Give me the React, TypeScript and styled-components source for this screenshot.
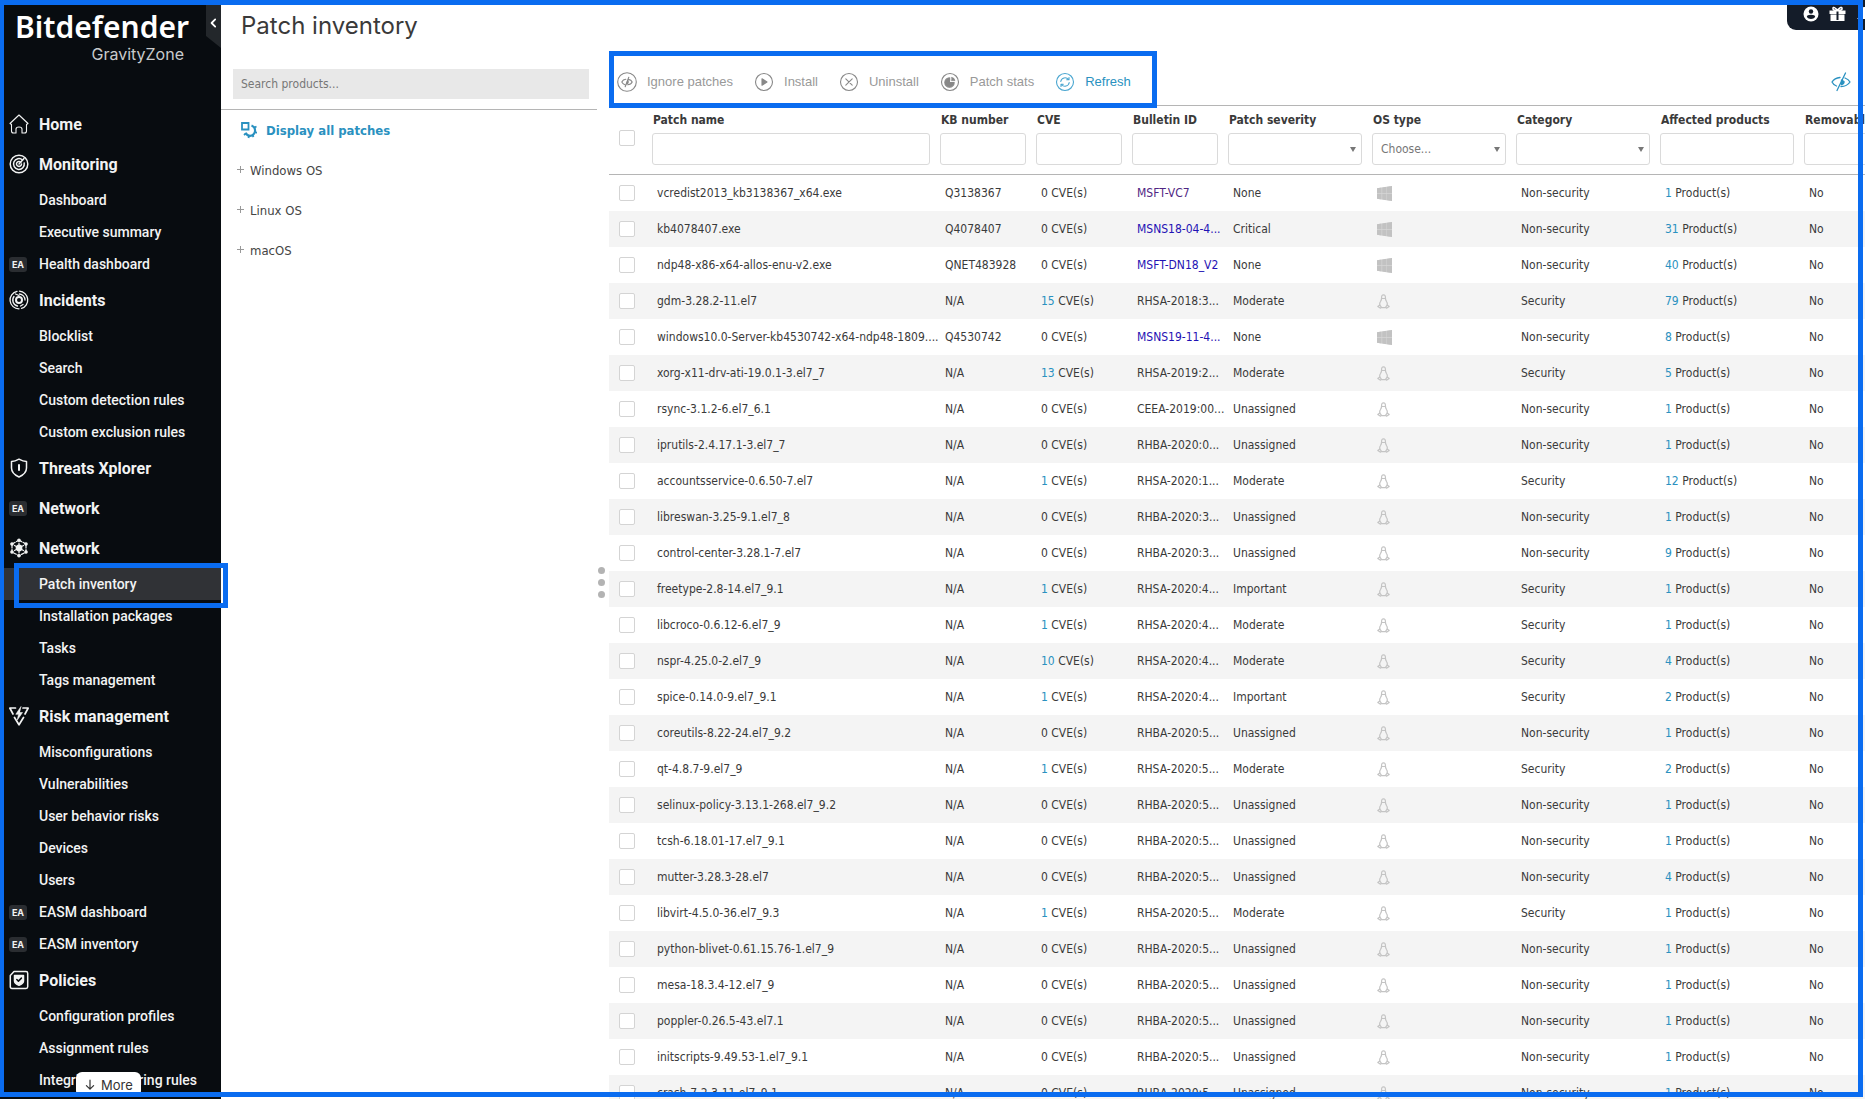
import React from "react";
import styled, { createGlobalStyle, css } from "styled-components";

const Global = createGlobalStyle`
  *, *::before, *::after { box-sizing: border-box; }
  body { margin: 0; background: #fff; overflow: hidden; }
  button, input, select { font: inherit; color: inherit; }
`;

const UI = `"DejaVu Sans Condensed", "Noto Sans", sans-serif`;
const NAV = `Roboto, "Noto Sans", sans-serif`;
const BRAND = `Inter, "Noto Sans", sans-serif`;
const ACCENT = "#0a6cf0";
const LINK = "#2a91c0";

const Page = styled.div`
  display: flex;
  position: relative;
  height: 100vh;
  overflow: hidden;
  font-family: ${UI};
  font-size: 12px;
  color: #3a3a3a;
`;

const Frame = styled.div`
  position: absolute;
  inset: 0 2px 2px 0;
  border: 5px solid ${ACCENT};
  border-left-width: 4px;
  pointer-events: none;
  z-index: 5;
`;

const Sidebar = styled.aside`
  position: relative;
  flex: none;
  width: 221px;
  background: #080c10;
  color: #f2f3f3;
  font-family: ${NAV};
`;

const Brand = styled.div`
  display: flex;
  flex-direction: column;
  align-items: flex-end;
  height: 104px;
  padding: 8px 32px 0 0;
  font-family: "Noto Sans", sans-serif;
  font-weight: 600;
  font-size: 30px;
  line-height: 38px;
  color: #fff;
`;

const Product = styled.span`
  padding-right: 5px;
  font-family: ${BRAND};
  font-weight: 400;
  font-size: 16px;
  line-height: 16px;
  color: #c9cbcd;
`;

const Collapse = styled.button`
  position: absolute;
  top: 0;
  right: 0;
  width: 15px;
  height: 48px;
  padding: 0;
  border: 0;
  background: #23272b;
  clip-path: polygon(100% 0, 0 0, 0 36px, 100% 100%);
  color: #fff;
`;

const NavItem = styled.a<{ $top?: boolean; $active?: boolean }>`
  position: relative;
  display: flex;
  align-items: center;
  height: ${(p) => (p.$top ? 40 : 32)}px;
  padding-left: 9px;
  background: ${(p) => (p.$active ? "#303236" : "transparent")};
  font-size: ${(p) => (p.$top ? 16 : 14)}px;
  font-weight: ${(p) => (p.$top ? 700 : 500)};
  color: inherit;
  text-decoration: none;
  white-space: nowrap;
  ${(p) =>
    p.$active &&
    css`
      &::after {
        content: "";
        position: absolute;
        inset: -5px -7px -8px 14px;
        border: 5px solid ${ACCENT};
        z-index: 6;
      }
    `}
`;

const NavIcon = styled.span`
  display: flex;
  flex: none;
  width: 30px;
`;

const EaTag = styled.span`
  width: 18px;
  border-radius: 3px;
  background: #2a2d31;
  font-family: ${BRAND};
  font-size: 9px;
  font-weight: 700;
  line-height: 15px;
  text-align: center;
`;

const More = styled.button`
  position: absolute;
  left: 76px;
  bottom: 2px;
  display: flex;
  align-items: center;
  gap: 5px;
  height: 25px;
  padding: 0 8px;
  border: 0;
  border-radius: 6px;
  background: #fff;
  font-family: ${BRAND};
  font-size: 13px;
  color: #333;
`;

const Main = styled.main`
  display: flex;
  flex-direction: column;
  flex: 1;
  min-width: 0;
`;

const TitleBar = styled.header`
  display: flex;
  justify-content: space-between;
  align-items: flex-start;
  flex: none;
  height: 49px;
  padding-left: 20px;
`;

const Title = styled.h1`
  margin: 0;
  padding-top: 12px;
  font-family: ${BRAND};
  font-size: 24px;
  font-weight: 400;
  line-height: 28px;
  color: #3a3a3a;
`;

const Account = styled.div`
  display: flex;
  align-items: center;
  gap: 10px;
  width: 78px;
  height: 30px;
  padding: 0 0 2px 16px;
  border-bottom-left-radius: 9px;
  background: #141c29;
  overflow: hidden;
`;

const IconButton = styled.button`
  display: flex;
  flex: none;
  padding: 0;
  border: 0;
  background: none;
  color: ${LINK};
`;

const Body = styled.div`
  display: flex;
  flex: 1;
  min-height: 0;
`;

const Products = styled.section`
  flex: none;
  width: 376px;
  font-size: 13px;
`;

const SearchRow = styled.div`
  padding: 20px 8px 10px 12px;
  border-bottom: 1px solid #b5b5b5;
`;

const Search = styled.input`
  display: block;
  width: 100%;
  height: 30px;
  padding: 0 8px;
  border: 0;
  background: #e8e8e8;
  font-size: 12px;
  &::placeholder { color: #777; opacity: 1; }
`;

const TreeItem = styled.button<{ $all?: boolean }>`
  display: flex;
  align-items: center;
  gap: ${(p) => (p.$all ? 9 : 5)}px;
  width: 100%;
  height: 40px;
  padding: 0 0 0 ${(p) => (p.$all ? 20 : 16)}px;
  border: 0;
  background: none;
  font-weight: ${(p) => (p.$all ? 700 : 400)};
  color: ${(p) => (p.$all ? LINK : "#444")};
`;

const Splitter = styled.div`
  display: flex;
  flex-direction: column;
  justify-content: center;
  gap: 5px;
  flex: none;
  width: 12px;
  padding: 16px 0 0 1px;
`;

const Dot = styled.span`
  width: 7px;
  height: 7px;
  border-radius: 50%;
  background: #b3b3b3;
`;

const Inventory = styled.section`
  display: flex;
  flex-direction: column;
  flex: 1;
  min-width: 0;
`;

const Toolbar = styled.div`
  display: flex;
  justify-content: space-between;
  align-items: center;
  flex: none;
  height: 56px;
  padding: 9px 14px 0 0;
`;

const Actions = styled.div`
  position: relative;
  display: flex;
  align-items: center;
  gap: 21px;
  height: 46px;
  padding: 0 26px 0 8px;
  &::after {
    content: "";
    position: absolute;
    inset: -8px 0 -3px;
    border: 5px solid ${ACCENT};
    pointer-events: none;
  }
`;

const Action = styled.button<{ $on?: boolean }>`
  display: flex;
  align-items: center;
  gap: 10px;
  padding: 0;
  border: 0;
  background: none;
  font-family: "Liberation Sans", sans-serif;
  font-size: 13px;
  color: ${(p) => (p.$on ? LINK : "#999")};
  svg { color: ${(p) => (p.$on ? "#4aa6d0" : "#888")}; }
`;

const Scroller = styled.div`
  flex: 1;
  overflow: hidden;
  border-top: 1px solid #b5b5b5;
`;

const Table = styled.table`
  width: 100%;
  min-width: 1334px;
  table-layout: fixed;
  border-spacing: 0;
`;

const Head = styled.th`
  padding: 5px 5px 9px;
  border-bottom: 1px solid #b5b5b5;
  text-align: left;
  font-weight: 700;
  line-height: 18px;
  white-space: nowrap;
`;

const HeadLabel = styled.label`
  display: block;
  margin-bottom: 4px;
  padding-left: 1px;
`;

const field = css`
  display: block;
  width: 100%;
  height: 32px;
  padding: 0 8px;
  border: 1px solid #dadada;
  border-radius: 3px;
  background: #fff;
  font-weight: 400;
  color: #777;
`;

const Filter = styled.input`${field}`;

const Select = styled.select`
  ${field}
  appearance: none;
`;

const SelectBox = styled.span`
  position: relative;
  display: block;
  &::after {
    content: "";
    position: absolute;
    right: 6px;
    top: 14px;
    border: solid transparent;
    border-width: 5px 3px 0;
    border-top-color: #777;
    pointer-events: none;
  }
`;

const Check = styled.input`
  display: block;
  appearance: none;
  width: 16px;
  height: 16px;
  margin: 0 0 0 5px;
  border: 1px solid #d4d4d4;
  border-radius: 2px;
  background: #fff;
`;

const Row = styled.tr`
  &:nth-child(even) { background: #f4f4f4; }
`;

const Cell = styled.td`
  height: 36px;
  padding: 0 0 0 10px;
  line-height: 18px;
  white-space: nowrap;
  svg { display: block; }
`;

const CheckCell = styled(Cell)`
  padding-left: 5px;
`;

const Link = styled.a<{ $visited?: boolean }>`
  color: ${(p) => (p.$visited ? "#4f2683" : "#1f12b4")};
  text-decoration: none;
`;

const Count = styled.a`
  color: ${LINK};
  text-decoration: none;
`;

const Svg = ({ size = 20, w = 1.4, children }: { size?: number; w?: number; children: React.ReactNode }) => (
  <svg width={size} height={size} viewBox="0 0 20 20" fill="none" stroke="currentColor" strokeWidth={w} strokeLinecap="round" strokeLinejoin="round" aria-hidden="true">
    {children}
  </svg>
);

const navIcons: Record<string, React.ReactNode> = {
  home: <Svg w={1.1}><path d="M1 9.5 10 1l9 8.500-1.500 1V17q0 2-2 2H13v-4q0-2-3-2t-3 2v4H4.500q-2 0-2-2v-6.500Z" /></Svg>,
  monitoring: <Svg w={1.5}><circle cx="10" cy="10" r="8.800" /><path d="M13.500 6A5.400 5.400 0 1 0 15.200 9M11.800 8.200A2.500 2.500 0 1 0 12.500 10" /><path d="m10 10 5-5.500" /></Svg>,
  incidents: <Svg w={1.3}><path d="M8 1.400A8.800 8.800 0 0 0 10 18.800M10.500 1.200a8.800 8.800 0 0 1 2 17.200" /><circle cx="10" cy="10" r="3" strokeWidth="2" /><path d="M8.500 16A6 6 0 0 1 5 6.500M10.500 4a6 6 0 0 1 5.500 6M6.500 4 10 5.500M14 14.500 11.500 16" /></Svg>,
  threats: <Svg w={1.5}><path d="M10 1.200Q14 3.500 17.500 3.500V10c0 4-3 7-7.500 9-4.500-2-7.500-5-7.500-9V3.500Q6 3.500 10 1.200Z" /><path d="M10 7v5" strokeWidth="2" /></Svg>,
  network: <Svg w={1.2}><path d="M10 2.200 17 6v8l-7 3.800L3 14V6Z" strokeDasharray="3 1.500" /><path d="M10 10V5M10 10v5M10 10 5.500 7.500M10 10l4.500-2.500M10 10l-4.500 2.500M10 10l4.500 2.500" /><g fill="currentColor"><circle cx="10" cy="10" r="2.800" /><circle cx="10" cy="2.200" r="1.200" /><circle cx="10" cy="17.800" r="1.200" /><circle cx="3" cy="6" r="1.200" /><circle cx="17" cy="6" r="1.200" /><circle cx="3" cy="14" r="1.200" /><circle cx="17" cy="14" r="1.200" /></g></Svg>,
  risk: <Svg w={1.7}><path d="M6.500 2H.8l3.200 6M14 2h5.200L16 8M5.500 11.500l4.500 7.300 4.500-7.300" /><path d="M11.800.8 6.800 8.300h2.700L8.300 14l5.200-7.500h-2.700Z" fill="currentColor" strokeWidth=".6" /></Svg>,
  policies: <Svg w={1.5}><path d="M5 1.500h12q1.700 0 1.700 1.700v13.600q0 1.700-1.700 1.700H3q-1.700 0-1.700-1.700V5.500Z" /><path d="M5.500 5.500h9V11q0 2.500-4.500 4.200Q5.500 13.500 5.500 11Z" fill="currentColor" /><path d="m7.800 9.500 1.600 1.600 3-3" stroke="#080c10" /></Svg>,
};

const nav: [string, string?, ("top" | "active")?][] = [
  ["Home", "home", "top"],
  ["Monitoring", "monitoring", "top"],
  ["Dashboard"], ["Executive summary"], ["Health dashboard", "EA"],
  ["Incidents", "incidents", "top"],
  ["Blocklist"], ["Search"], ["Custom detection rules"], ["Custom exclusion rules"],
  ["Threats Xplorer", "threats", "top"],
  ["Network", "EA", "top"],
  ["Network", "network", "top"],
  ["Patch inventory", undefined, "active"],
  ["Installation packages"], ["Tasks"], ["Tags management"],
  ["Risk management", "risk", "top"],
  ["Misconfigurations"], ["Vulnerabilities"], ["User behavior risks"], ["Devices"], ["Users"],
  ["EASM dashboard", "EA"], ["EASM inventory", "EA"],
  ["Policies", "policies", "top"],
  ["Configuration profiles"], ["Assignment rules"], ["Integrity monitoring rules"],
];

const ring = <circle cx="10" cy="10" r="8.500" />;
const actions: [string, React.ReactNode][] = [
  ["Ignore patches", <Svg w={1.1}><circle cx="10" cy="10" r="9.300" /><path d="M8.800 7.300Q6 7.500 4.800 10q1 2 3 2.700M11.500 7.400q2.800.6 3.700 2.600-1.200 2.600-4.500 2.800M11.800 5.200 8.200 14.800" /><path d="M10.800 8.200 9.600 12q2.400-.6 1.200-3.800Z" fill="currentColor" /></Svg>],
  ["Install", <Svg w={1.1}>{ring}<path d="M8 6.800v6.400l5-3.200Z" fill="currentColor" /></Svg>],
  ["Uninstall", <Svg w={1.1}>{ring}<path d="m6.800 6.800 6.400 6.400m0-6.400-6.400 6.400" /></Svg>],
  ["Patch stats", <Svg w={1.1}>{ring}<path d="M9.500 5.800v4.700h4.700A4.700 4.700 0 1 1 9.500 5.800Z" fill="currentColor" /><path d="M11.500 5.300A4 4 0 0 1 15 8.700h-3.500Z" fill="currentColor" strokeWidth=".5" /></Svg>],
  ["Refresh", <Svg w={1.1}>{ring}<path d="M5.800 9.500a4.300 4.300 0 0 1 7.700-2M14.200 10.500a4.300 4.300 0 0 1-7.700 2M14 5.500v2.300h-2.300M6 14.500v-2.300h2.300" /></Svg>],
];

const WindowsIcon = () => (
  <svg width="15" height="15" viewBox="0 0 15 15" fill="#c2c2c2" aria-label="Windows" role="img">
    <path d="M0 2.200 15 0v15L0 12.700Z" fill="#d6d6d6" />
    <path d="M0 2.200 4.500 1.500v5.600H0ZM5.200 1.400 9.500.8v6.300H5.200ZM10 .7 15 0v7.100h-5ZM0 7.800h4.500v5.600l-4.500-.7ZM5.200 7.800h4.300v6.400l-4.300-.7ZM10 7.800h5V15l-5-.8Z" />
  </svg>
);

const LinuxIcon = () => (
  <svg width="13" height="15" viewBox="0 0 13 15" fill="none" stroke="#c4c4c4" strokeWidth="1.200" strokeLinejoin="round" strokeLinecap="round" aria-label="Linux" role="img">
    <path d="M2.800 11Q2.300 9 3.500 7.500 4.800 5.500 4.600 3.500 4.500.8 6.500.8t1.900 2.700q-.1 2 1.100 4Q10.700 9 10.200 11" />
    <path d="M5.300 4.500h2.400M.8 12.500l2-1.500 1.500 2.200L3.500 14.200ZM12.200 12.500l-2-1.500-1.500 2.200.8 1ZM4.500 13.700h4" />
  </svg>
);

type Patch = [name: string, kb: string, cve: number, bulletin: string, severity: string, os: "w" | "l", affected: number];
const patches: Patch[] = [
  ["vcredist2013_kb3138367_x64.exe", "Q3138367", 0, "MSFT-VC7", "None", "w", 1],
  ["kb4078407.exe", "Q4078407", 0, "MSNS18-04-4...", "Critical", "w", 31],
  ["ndp48-x86-x64-allos-enu-v2.exe", "QNET483928", 0, "MSFT-DN18_V2", "None", "w", 40],
  ["gdm-3.28.2-11.el7", "N/A", 15, "RHSA-2018:3...", "Moderate", "l", 79],
  ["windows10.0-Server-kb4530742-x64-ndp48-1809....", "Q4530742", 0, "MSNS19-11-4...", "None", "w", 8],
  ["xorg-x11-drv-ati-19.0.1-3.el7_7", "N/A", 13, "RHSA-2019:2...", "Moderate", "l", 5],
  ["rsync-3.1.2-6.el7_6.1", "N/A", 0, "CEEA-2019:00...", "Unassigned", "l", 1],
  ["iprutils-2.4.17.1-3.el7_7", "N/A", 0, "RHBA-2020:0...", "Unassigned", "l", 1],
  ["accountsservice-0.6.50-7.el7", "N/A", 1, "RHSA-2020:1...", "Moderate", "l", 12],
  ["libreswan-3.25-9.1.el7_8", "N/A", 0, "RHBA-2020:3...", "Unassigned", "l", 1],
  ["control-center-3.28.1-7.el7", "N/A", 0, "RHBA-2020:3...", "Unassigned", "l", 9],
  ["freetype-2.8-14.el7_9.1", "N/A", 1, "RHSA-2020:4...", "Important", "l", 1],
  ["libcroco-0.6.12-6.el7_9", "N/A", 1, "RHSA-2020:4...", "Moderate", "l", 1],
  ["nspr-4.25.0-2.el7_9", "N/A", 10, "RHSA-2020:4...", "Moderate", "l", 4],
  ["spice-0.14.0-9.el7_9.1", "N/A", 1, "RHSA-2020:4...", "Important", "l", 2],
  ["coreutils-8.22-24.el7_9.2", "N/A", 0, "RHBA-2020:5...", "Unassigned", "l", 1],
  ["qt-4.8.7-9.el7_9", "N/A", 1, "RHSA-2020:5...", "Moderate", "l", 2],
  ["selinux-policy-3.13.1-268.el7_9.2", "N/A", 0, "RHBA-2020:5...", "Unassigned", "l", 1],
  ["tcsh-6.18.01-17.el7_9.1", "N/A", 0, "RHBA-2020:5...", "Unassigned", "l", 1],
  ["mutter-3.28.3-28.el7", "N/A", 0, "RHBA-2020:5...", "Unassigned", "l", 4],
  ["libvirt-4.5.0-36.el7_9.3", "N/A", 1, "RHSA-2020:5...", "Moderate", "l", 1],
  ["python-blivet-0.61.15.76-1.el7_9", "N/A", 0, "RHBA-2020:5...", "Unassigned", "l", 1],
  ["mesa-18.3.4-12.el7_9", "N/A", 0, "RHBA-2020:5...", "Unassigned", "l", 1],
  ["poppler-0.26.5-43.el7.1", "N/A", 0, "RHBA-2020:5...", "Unassigned", "l", 1],
  ["initscripts-9.49.53-1.el7_9.1", "N/A", 0, "RHBA-2020:5...", "Unassigned", "l", 1],
  ["crash-7.2.3-11.el7_9.1", "N/A", 0, "RHBA-2020:5...", "Unassigned", "l", 1],
];

const columns: [label: string, width: number, options?: string[]][] = [
  ["Patch name", 288],
  ["KB number", 96],
  ["CVE", 96],
  ["Bulletin ID", 96],
  ["Patch severity", 144, [""]],
  ["OS type", 144, ["Choose..."]],
  ["Category", 144, [""]],
  ["Affected products", 144],
  ["Removable", 144],
];

const isSecurity = (p: Patch) => p[3].startsWith("RHSA");

export default function App() {
  return (
    <Page>
      <Global />
      <Sidebar>
        <Brand>
          Bitdefender
          <Product>GravityZone</Product>
        </Brand>
        <Collapse aria-label="Collapse menu"><Svg size={12} w={3}><path d="m12 4-6 6 6 6" /></Svg></Collapse>
        <nav>
          {nav.map(([label, icon, kind], i) => (
            <NavItem key={i} href="#" $top={kind === "top"} $active={kind === "active"}>
              <NavIcon>{icon === "EA" ? <EaTag>EA</EaTag> : icon && navIcons[icon]}</NavIcon>
              {label}
            </NavItem>
          ))}
        </nav>
        <More><Svg size={12} w={2}><path d="M10 2v15m-6-6 6 6 6-6" /></Svg>More</More>
      </Sidebar>
      <Main>
        <TitleBar>
          <Title>Patch inventory</Title>
          <Account>
            <IconButton aria-label="Account">
              <svg width="16" height="16" viewBox="0 0 16 16"><circle cx="8" cy="8" r="7.500" fill="#fff" /><circle cx="8" cy="5.500" r="2.200" fill="#141c29" /><path d="M3.800 11q0-2.200 4.200-2.200t4.200 2.200q-1.500 2-4.200 2t-4.200-2Z" fill="#141c29" /></svg>
            </IconButton>
            <IconButton aria-label="What's new">
              <svg width="17" height="16" viewBox="0 0 17 16" fill="#fff"><path d="M.5 4.500h16V8H.500ZM1.500 8.500h14V15h-14Z" /><path d="M8.500 4.500Q3.500 4.500 4 2.300T8.500 4Q12.500 0 13 2.300T8.500 4.500Z" fill="none" stroke="#fff" strokeWidth="1.600" /><path d="M8.500 5.500V14" stroke="#141c29" strokeWidth="2" /></svg>
            </IconButton>
            <IconButton aria-label="Notifications">
              <svg width="16" height="16" viewBox="0 0 16 16" fill="#fff"><path d="M8 1q5 0 5 6v4l2 2H1l2-2V7q0-6 5-6Z" /></svg>
            </IconButton>
          </Account>
        </TitleBar>
        <Body>
          <Products>
            <SearchRow><Search aria-label="Search products" placeholder="Search products..." /></SearchRow>
            <TreeItem $all>
              <svg width="16" height="17" viewBox="0 0 16 17" fill="none" stroke="currentColor" aria-hidden="true">
                <path d="M1 1h6.500v6.500H1Z" strokeWidth="1.800" />
                <path d="M10.500 3.500Q14.500 5 14 9.500q-1 4-5 4.300-3 0-4.500-3" strokeWidth="2.200" />
                <path d="M13.500 5.500l2-1M14 10l2 .8M11.500 13l1 2M8 13.500 7.500 16M4.800 11.500 3 13" strokeWidth="1.800" />
              </svg>
              Display all patches
            </TreeItem>
            {["Windows OS", "Linux OS", "macOS"].map((os) => (
              <TreeItem key={os}>
                <svg width="8" height="8" viewBox="0 0 8 8" stroke="#999" aria-hidden="true"><path d="M3.500 0v7M0 3.500h7" /></svg>
                {os}
              </TreeItem>
            ))}
          </Products>
          <Splitter><Dot /><Dot /><Dot /></Splitter>
          <Inventory>
            <Toolbar>
              <Actions>
                {actions.map(([label, icon]) => (
                  <Action key={label} $on={label === "Refresh"}>{icon}{label}</Action>
                ))}
              </Actions>
              <IconButton aria-label="Show or hide filters">
                <Svg w={1.300}><path d="M9 5.500Q3.500 6 1 10q1.500 3 4.500 4M14 6q3.500 1.300 5 4-3 4.500-9 4.500M14.500 1 6 18.500" /><path d="M10.500 8v4.500a2.500 2.500 0 0 0 2.500-3Z" fill="currentColor" /></Svg>
              </IconButton>
            </Toolbar>
            <Scroller>
              <Table>
                <colgroup>
                  <col width={38} />
                  {columns.map(([label, width]) => <col key={label} width={width} />)}
                </colgroup>
                <thead>
                  <tr>
                    <Head><Check type="checkbox" aria-label="Select all patches" /></Head>
                    {columns.map(([label, , options]) => (
                      <Head key={label}>
                        <HeadLabel htmlFor={label}>{label}</HeadLabel>
                        {options ? (
                          <SelectBox>
                            <Select id={label}>{options.map((o) => <option key={o}>{o}</option>)}</Select>
                          </SelectBox>
                        ) : (
                          <Filter id={label} />
                        )}
                      </Head>
                    ))}
                  </tr>
                </thead>
                <tbody>
                  {patches.map((p) => {
                    const [name, kb, cve, bulletin, severity, os, affected] = p;
                    return (
                      <Row key={name}>
                        <CheckCell><Check type="checkbox" aria-label={`Select ${name}`} /></CheckCell>
                        <Cell>{name}</Cell>
                        <Cell>{kb}</Cell>
                        <Cell>{cve ? <Count href="#">{cve}</Count> : cve} CVE(s)</Cell>
                        <Cell>{os === "w" ? <Link href="#" $visited={bulletin === "MSFT-VC7"}>{bulletin}</Link> : bulletin}</Cell>
                        <Cell>{severity}</Cell>
                        <Cell>{os === "w" ? <WindowsIcon /> : <LinuxIcon />}</Cell>
                        <Cell>{isSecurity(p) ? "Security" : "Non-security"}</Cell>
                        <Cell><Count href="#">{affected}</Count> Product(s)</Cell>
                        <Cell>No</Cell>
                      </Row>
                    );
                  })}
                </tbody>
              </Table>
            </Scroller>
          </Inventory>
        </Body>
      </Main>
      <Frame />
    </Page>
  );
}
